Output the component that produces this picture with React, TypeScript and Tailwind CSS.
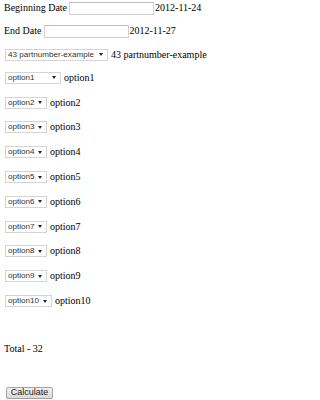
import React from 'react'

const serif = "font-['Liberation_Serif','Times_New_Roman',serif]"
const sans = "font-['Liberation_Sans',Arial,sans-serif]"

function FakeSelect({ value, width }: { value: string; width: string }) {
  return (
    <span
      className={`flex items-center justify-between shrink-0 h-[12px] ${width} border border-[#d4d4d4] bg-white pl-[2px] pr-[4px] text-[8.1px] text-[#333] whitespace-nowrap ${sans}`}
    >
      <span className="leading-none">{value}</span>
      <svg width="4" height="3" viewBox="0 0 4 3" className="shrink-0">
        <path d="M0 0 H4 L2 3 Z" fill="#222" />
      </svg>
    </span>
  )
}

function DateRow({ label, inputWidth, value }: { label: string; inputWidth: string; value: string }) {
  return (
    <div className="flex items-center h-[13px] whitespace-nowrap">
      <span>{label}</span>
      <span className={`ml-[2px] shrink-0 h-[13px] ${inputWidth} border border-[#d0d0d0] border-t-[#bdbdbd] bg-white`} />
      <span className="ml-[1px]">{value}</span>
    </div>
  )
}

const options = [
  { v: 'option1', w: 'w-[56px]' },
  { v: 'option2', w: 'w-[42px]' },
  { v: 'option3', w: 'w-[42px]' },
  { v: 'option4', w: 'w-[42px]' },
  { v: 'option5', w: 'w-[42px]' },
  { v: 'option6', w: 'w-[42px]' },
  { v: 'option7', w: 'w-[42px]' },
  { v: 'option8', w: 'w-[42px]' },
  { v: 'option9', w: 'w-[42px]' },
  { v: 'option10', w: 'w-[47px]' },
]

export default function App() {
  return (
    <div className={`w-[216px] h-[400px] overflow-hidden bg-white text-black text-[10px] leading-none pl-[4px] pt-[1.5px] ${serif}`}>
      <div className="flex flex-col gap-[10.3px]">
        <DateRow label="Beginning Date" inputWidth="w-[85px]" value="2012-11-24" />
        <DateRow label="End Date" inputWidth="w-[85px]" value="2012-11-27" />
        <div className="flex items-center h-[13px] pl-[1px] whitespace-nowrap">
          <FakeSelect value="43 partnumber-example" width="w-[103px]" />
          <span className="ml-[3px]">43 partnumber-example</span>
        </div>
        <div className="flex flex-col gap-[11.8px]">
          {options.map(o => (
            <div key={o.v} className="flex items-center h-[13px] pl-[1px] whitespace-nowrap">
              <FakeSelect value={o.v} width={o.w} />
              <span className="ml-[3px]">{o.v}</span>
            </div>
          ))}
        </div>
      </div>

      <div className="mt-[35px] h-[13px] flex items-center">Total - 32</div>

      <button
        className={`mt-[31px] ml-[2px] h-[12px] w-[47px] flex items-center justify-center border border-[#a3a3a3] rounded-[2px] bg-gradient-to-b from-[#f2f2f2] to-[#d9d9d9] text-[9px] text-[#222] ${sans}`}
      >
        Calculate
      </button>
    </div>
  )
}
